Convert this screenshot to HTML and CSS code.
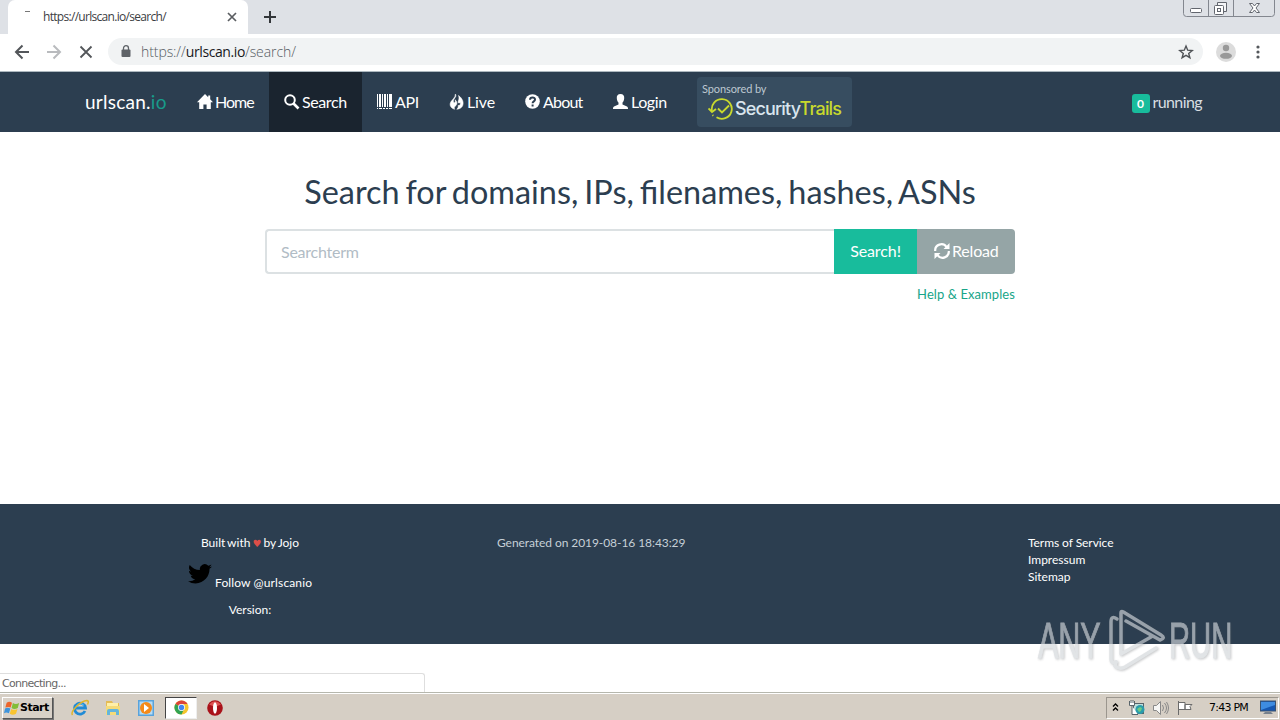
FILE: index.html
```html
<!DOCTYPE html>
<html lang="en">
<head>
<meta charset="utf-8">
<title>Search - urlscan.io</title>
<link rel="stylesheet" href="styles.css">
</head>
<body>
<div class="screen">
  <header class="tabstrip">
    <div class="tab">
      <span class="spinner"></span>
      <span class="tab-title">https://urlscan.io/search/</span>
      <svg class="tab-close" width="10" height="10" viewBox="0 0 10 10"><path d="M1 1l8 8M9 1L1 9" stroke="#5a5d61" stroke-width="1.7"/></svg>
    </div>
    <svg class="new-tab" width="12" height="12" viewBox="0 0 12 12"><path d="M6 0v12M0 6h12" stroke="#33363a" stroke-width="2"/></svg>
    <div class="window-buttons">
      <svg width="94" height="18" viewBox="0 0 94 18" fill="none"><path d="M1.500 0V13.500q0 3 3 3H89.500q3 0 3-3V0M26.500 0v16M51.500 0v16" stroke="#83878f"/><g stroke="#62666e"><rect x="8.500" y="8.500" width="11" height="4" rx="1" fill="#fff"/><path d="M35.500 5.500v-3h9v9h-3" fill="#f4f5f7"/><rect x="32.500" y="5.500" width="9" height="9" rx="1" fill="#fff"/><rect x="35.500" y="8.500" width="3" height="3"/><path d="M67.500 3.500h3l2 2.500 2-2.500h3l-3.500 4.500 3.500 4.500h-3l-2-2.500-2 2.500h-3l3.500-4.500z" fill="#fff"/></g></svg>
    </div>
  </header>
  <div class="toolbar">
    <svg class="tool" width="16" height="16" viewBox="0 0 16 16" fill="none" stroke="#53565a" stroke-width="2"><path d="M15 8H2M8.500 1.500L2 8l6.500 6.500"/></svg>
    <svg class="tool" width="16" height="16" viewBox="0 0 16 16" fill="none" stroke="#b9bbbe" stroke-width="2"><path d="M1 8h13M7.500 1.500L14 8l-6.500 6.500"/></svg>
    <svg class="tool" width="16" height="16" viewBox="0 0 16 16" fill="none" stroke="#53565a" stroke-width="1.800"><path d="M2.500 2.500l11 11M13.500 2.500l-11 11"/></svg>
    <div class="omnibox">
      <svg width="10" height="13" viewBox="0 0 10 13"><rect y="4.500" x=".5" width="9" height="7.500" rx="1" fill="#5f6368"/><path d="M2.500 5V3.200a2.500 2.500 0 0 1 5 0V5" fill="none" stroke="#5f6368" stroke-width="1.300"/></svg>
      <span class="url">https://<b>urlscan.io</b>/search/</span>
      <svg class="star" width="16" height="16" viewBox="0 0 16 16" fill="none"><path d="M8 2l1.700 4.200 4.500.3-3.500 2.900 1.200 4.300L8 11.300l-3.900 2.400 1.200-4.300-3.500-2.900 4.500-.3z" stroke="#505357" stroke-width="1.400"/></svg>
    </div>
    <svg class="avatar" width="20" height="20" viewBox="0 0 20 20"><circle cx="10" cy="10" r="10" fill="#dcdcdc"/><circle cx="10" cy="6" r="3.200" fill="#999"/><ellipse cx="10" cy="13.800" rx="6" ry="3" fill="#999"/></svg>
    <svg class="dots" width="4" height="14" viewBox="0 0 4 14" fill="#55585c"><circle cx="2" cy="2" r="1.600"/><circle cx="2" cy="7" r="1.600"/><circle cx="2" cy="12" r="1.600"/></svg>
  </div>

  <nav class="navbar">
    <a class="brand">urlscan.<span>io</span></a>
    <a class="nav-item home"><svg width="16" height="16" viewBox="0 0 16 16"><path d="M8 0l3.200 3.200V1.500h2V5.200L16 8.200h-2.200V15H9.600v-4.500H6.400V15H2.200V8.200H0z"/></svg><span>Home</span></a>
    <a class="nav-item search active"><svg width="16" height="16" viewBox="0 0 16 16"><circle cx="6" cy="6" r="4.800" fill="none" stroke="#fff" stroke-width="2"/><path d="M9.500 9.500l5 5" stroke="#fff" stroke-width="2.600"/></svg><span>Search</span></a>
    <a class="nav-item api"><svg width="16" height="16" viewBox="0 0 16 16"><path d="M0 0h1v13H0zM2 0h2v13H2zM5 0h1v13H5zM7 0h2v13H7zM10 0h1v13h-1zM12 0h3v13h-3zM0 14h1v1H0zM2 14h3v1H2zM6 14h2v1H6zM9 14h2v1H9zM12 14h3v1h-3z"/></svg><span>API</span></a>
    <a class="nav-item live"><svg width="16" height="16" viewBox="0 0 16 16"><path d="M6.400 0C8.500 3 3.500 5 4.500 8c.7 1.800 2.500.4 1.600-2.200C9 8 8 11 6.500 12c-1.300 1-1.500 2-.8 3.300C2 14.200.3 11.500 1.500 8.500 2.500 6 6.500 4 6.400 0zM9.500 1.500c4.500 3.200 5.500 7.500 4 10.500-1 2-3 3-5.700 3.300 1.700-1.700 1.500-2.800 1.200-3.700 2.200.2 2.800-1.600 2.100-3.400-.5 1-1.600 1.300-1.900.2-.4-1.800 1.700-3 .3-6.900z" stroke="#fff" stroke-width=".5"/></svg><span>Live</span></a>
    <a class="nav-item about"><svg width="16" height="16" viewBox="0 0 16 16"><circle cx="7.500" cy="7.500" r="7.300"/><path d="M5 5.800C5 2.500 10.200 2.700 10 5.600 9.900 7.500 7.600 7.200 7.600 9.300M7.600 10.500v2" fill="none" stroke="#2c3e50" stroke-width="2"/></svg><span>About</span></a>
    <a class="nav-item login"><svg width="16" height="16" viewBox="0 0 16 16"><path d="M7.500 0c2.700 0 4 1.800 3.700 4.200-.1 2-1 3.700-1.700 4.400v2l4.500 2c.8.400 1 1.200 1 2.400H0c0-1.200.2-2 1-2.400l4.500-2v-2C4.800 7.900 3.900 6.200 3.800 4.200 3.500 1.800 4.800 0 7.500 0z"/></svg><span>Login</span></a>
    <a class="sponsor">
      <span class="sponsor-label">Sponsored by</span>
      <span class="sponsor-row"><svg width="26" height="22" viewBox="0 0 26 22" fill="none" stroke="#c9d92d" stroke-width="1.800"><path d="M4 13A10 9.800 0 1 1 8.500 19.300"/><path d="M.5 10.500L4 14l4-3M10 10.500l4 4 7-7"/><path d="M4.500 17l.8.700"/></svg><span class="security">Security<em>Trails</em></span></span>
    </a>
    <div class="running"><span class="badge">0</span><span class="running-text">running</span></div>
  </nav>

  <main>
    <h1>Search for domains, IPs, filenames, hashes, ASNs</h1>
    <form class="search-group">
      <div class="search-input">Searchterm</div>
      <div class="search-button"><span>Search!</span></div>
      <div class="reload-button"><svg width="16" height="16" viewBox="0 0 16 16" fill="none" stroke="#fff" stroke-width="2.200"><path d="M1.200 8A6.200 6.200 0 0 1 12.500 4M14.800 8A6.200 6.200 0 0 1 3.500 12"/><path d="M15.500 0v6H9.500zM.5 16v-6h6z" fill="#fff" stroke="none"/></svg><span>Reload</span></div>
    </form>
    <a class="help"><span>Help &amp; Examples</span></a>
  </main>

  <footer class="footer">
    <div class="built">
      <p class="credit">Built with <i>♥</i> by Jojo</p>
      <p class="follow"><svg width="24" height="20" viewBox="0 0 24 20"><path d="M24 2.400c-.9.400-1.800.7-2.800.8 1-.6 1.800-1.600 2.200-2.700-1 .6-2 1-3.100 1.200A4.900 4.900 0 0 0 11.900 6C7.800 5.900 4.200 3.900 1.700.9.400 3.100 1 6 3.200 7.400c-.8 0-1.600-.2-2.200-.6-.1 2.300 1.600 4.400 3.900 4.900-.7.200-1.500.2-2.200.1.600 2 2.400 3.400 4.600 3.400A9.900 9.900 0 0 1 0 17.200 14 14 0 0 0 7.500 19.400c9.100 0 14.300-7.700 14-14.600 1-.6 1.800-1.500 2.500-2.400z"/></svg><span>Follow @urlscanio</span></p>
      <p class="version">Version:</p>
    </div>
    <div class="generated"><span>Generated on 2019-08-16 18:43:29</span></div>
    <ul class="links"><li class="terms">Terms of Service</li><li class="impressum">Impressum</li><li class="sitemap">Sitemap</li></ul>
  </footer>

  <div class="status"><span>Connecting...</span></div>

  <div class="taskbar">
    <div class="start"><svg width="18" height="16" viewBox="0 0 18 16"><path d="M3 2q3-2 6 0L7.500 7.500Q5 6 1.500 7.500z" fill="#ec652c"/><path d="M10 2.500q3 2 7 0L15.500 8q-4 2-7 0z" fill="#82bd38"/><path d="M1.200 8.500q3-1.500 6 0L5.500 14q-3-1.800-5.500 0z" fill="#3e94dc"/><path d="M8.200 9q3 2 7 0l-1.700 5.500q-3.500 2-7 0z" fill="#f9c430"/></svg><b>Start</b></div>
    <div class="launch">
      <svg width="18" height="18" viewBox="0 0 18 18" fill="none"><path d="M14 12A5.500 5.500 0 1 1 14.500 9H5" stroke="#218bd5" stroke-width="2.800"/><path d="M5 8.200a4.600 4.600 0 0 1 8-1.800" stroke="#62c2f2"/><path d="M1.500 16C-1 13 9 2 16 1.500c2 .2 1.300 2.500.5 4" stroke="#dfb52b" stroke-width="1.500"/></svg>
      <svg width="18" height="18" viewBox="0 0 18 18"><path d="M2 2h6l1 2h6v11H2z" fill="#e4bb55"/><path d="M3 4h11v8H3z" fill="#fff0a8"/><path d="M2 7h14v9H2z" fill="#f5db79"/><path d="M3 16v-4q0-2 2-2h8q2 0 2 2v4h-3v-3H6v3z" fill="#64b5dc"/></svg>
      <svg width="18" height="18" viewBox="0 0 18 18"><rect x="1" y="1" width="16" height="16" fill="#58a3dc"/><rect x="2.500" y="2.500" width="13" height="13" fill="#b4dcf5"/><circle cx="9" cy="9" r="6" fill="#f58a19"/><path d="M7 5l5 4-5 4z" fill="#fff"/></svg>
    </div>
    <div class="chrome-task"><svg width="15" height="15" viewBox="0 0 16 16"><circle cx="8" cy="8" r="7.500" fill="#f5c52d"/><path d="M8 8L1.500 4.250A7.500 7.500 0 0 1 14.500 4.250H8z" fill="#dc4438"/><path d="M8 8l-6.500-3.750A7.500 7.500 0 0 0 8 15.500L11 9z" fill="#31a352"/><circle cx="8" cy="8" r="3.700" fill="#fff"/><circle cx="8" cy="8" r="2.900" fill="#4385ef"/></svg></div>
    <svg class="opera" width="16" height="16" viewBox="0 0 16 16"><circle cx="8" cy="8" r="7.800" fill="#a9121a"/><path d="M2 4.500Q8-2 14 4.500L8 7z" fill="#dc5050"/><ellipse cx="8" cy="8" rx="2" ry="5.800" fill="#fff"/></svg>
    <div class="tray">
      <svg class="chevrons" width="7" height="9" viewBox="0 0 7 9" fill="none" stroke="#000" stroke-width="1.300"><path d="M1 3.500l2.500-2.500L6 3.500M1 7.500L3.500 5 6 7.500"/></svg>
      <svg class="network" width="18" height="16" viewBox="0 0 18 16"><rect x="5.500" y="3.500" width="10" height="10" fill="#bedfdd" stroke="#58636a"/><path d="M1.500 1v4.500h5V1M3 0v3M5 0v3M4 6v8.500h6" fill="#fff" stroke="#59646a"/><circle cx="12" cy="9.500" r="4.500" fill="#2a9cac"/><path d="M9 9l3-2 2 1-1 3-2 1z" fill="#6fcb83"/></svg>
      <svg class="speaker" width="18" height="16" viewBox="0 0 18 16" fill="none" stroke="#888"><path d="M1.500 5.500h3l4-4v13l-4-4h-3z" fill="#f6f6f4"/><path d="M10.500 5q2 3 0 6M12.500 3q4 5 0 10M14.500 2q4 6 0 12"/></svg>
      <svg class="flag" width="17" height="16" viewBox="0 0 17 16" fill="#fff" stroke="#6b6b6b"><path d="M1.500 1v14M2 2.500h6v7H2M8 4.500h7l-2 2 1 3H8z"/></svg>
      <span class="time">7:43 PM</span>
      <svg class="desktop" width="17" height="15" viewBox="0 0 17 15"><rect x=".5" y="1" width="15" height="10" fill="#1557b1" stroke="#3b526e"/><path d="M1 2h14v3L1 10z" fill="#3e8ce0"/><path d="M5 12h6l2 2H3z" fill="#77818d"/></svg>
    </div>
  </div>

  <div class="watermark">
    <span class="mark-text any">ANY</span>
    <svg class="mark" width="62" height="70" viewBox="0 0 62 70" fill="none" stroke-linejoin="round" stroke-linecap="round"><path d="M12 14Q6 10 6 17V54q0 5 5 3"/><path d="M16 49V8q0-3 4 0l36 22q5 3-1 5L21 16M16 49l30-17M11 57l-1 4q4 4 10 1l31-19"/></svg>
    <span class="mark-text run">RUN</span>
  </div>
</div>
</body>
</html>
```
FILE: styles.css
```css
* { box-sizing: border-box; }
body { margin: 0; overflow: hidden; }
p, h1, ul { margin: 0; padding: 0; }
svg { display: block; flex: none; }
.screen { position: relative; display: flex; flex-direction: column; width: 1280px; height: 720px; background: #fff; font-family: Lato, sans-serif; white-space: nowrap; overflow: hidden; }
.tabstrip { display: flex; align-items: flex-start; height: 34px; background: #dee1e6; flex: none; }
.tab { display: flex; align-items: center; width: 240px; height: 34px; margin-left: 8px; padding: 0 11px 0 17px; background: #fff; border-radius: 7px 7px 0 0; }
.spinner { width: 5px; height: 1px; background: #777; margin: -11px 13px 0 0; }
.tab-title { font: 12px/16px "Open Sans", sans-serif; letter-spacing: -0.7px; color: #3c4043; }
.tab-close { margin-left: auto; }
.new-tab { margin: 11px 0 0 16px; }
.window-buttons { margin: 0 0 0 auto; width: 98px; }
.toolbar { display: flex; align-items: center; height: 38px; padding: 0 20px 2px 14px; border-bottom: 1px solid #adb8bf; flex: none; }
.tool { margin-right: 16px; }
.omnibox { display: flex; align-items: center; width: 1095px; height: 27px; border-radius: 14px; background: #f1f3f4; padding: 0 9px 0 13px; margin-left: -2px; }
.url { font: 300 14px/20px "Open Sans", sans-serif; letter-spacing: -0.08px; color: #555b61; margin-left: 10px; }
.url b { color: #17191c; font-weight: 400; letter-spacing: -0.4px; }
.star { margin-left: auto; }
.avatar { margin-left: 13px; }
.dots { margin-left: 20px; }
.navbar { display: flex; height: 60px; background: #2c3e50; color: #fff; flex: none; }
.brand { width: 97px; margin-left: 85px; font-size: 19px; line-height: 60px; letter-spacing: .25px; }
.brand span { color: #189b8a; }
.nav-item { display: flex; align-items: center; padding-left: 15px; gap: 2px; font-size: 16px; line-height: 60px; letter-spacing: -.4px; }
.nav-item svg { fill: #fff; }
.home { width: 87px; letter-spacing: -1px; }
.search { width: 93px; }
.active { background: #1a242f; }
.api { width: 72px; }
.live { width: 76px; letter-spacing: -.1px; }
.about { width: 88px; letter-spacing: -.8px; }
.login { width: 84px; }
.sponsor { width: 155px; height: 50px; margin: 5px 0 0 15px; border-radius: 4px; background: #374d60; }
.sponsor-label { display: block; padding: 5px 0 0 5px; font-size: 11px; line-height: 14px; letter-spacing: -.1px; color: #bdc8d1; }
.sponsor-row { display: flex; align-items: center; height: 24px; padding: 2px 0 0 11px; }
.security { font: 500 18px/24px Inter, sans-serif; letter-spacing: -.85px; color: #d9e5ee; margin-left: 1px; }
.security em { color: #c9d92d; font-style: normal; }
.running { display: flex; align-items: center; margin: 2px 78px 0 auto; gap: 3px; color: #d9dee2; font-size: 16px; }
.running-text { margin-top: -3px; letter-spacing: -.6px; }
.badge { display: grid; place-items: center; width: 18px; height: 19px; border-radius: 3px; background: #18bc9c; color: #fff; font-size: 12px; font-weight: 700; }
main { height: 372px; display: flex; flex-direction: column; align-items: center; color: #2c3e50; flex: none; }
h1 { margin-top: 37px; font-size: 32.4px; line-height: 46px; font-weight: 400; word-spacing: -2.300px; }
.search-group { display: flex; width: 750px; height: 45px; margin-top: 14px; font-size: 16px; color: #fff; }
.search-input { width: 569px; border: 2px solid #dce1e3; border-right: 0; border-radius: 4px 0 0 4px; padding-left: 14px; line-height: 42px; color: #b1bcc5; letter-spacing: -.25px; }
.search-button { width: 83px; background: #18bc9c; text-align: center; line-height: 44px; letter-spacing: -.1px; }
.reload-button { display: flex; align-items: center; width: 98px; padding-left: 17px; gap: 2px; border-radius: 0 4px 4px 0; background: #95a5a6; letter-spacing: -.2px; padding-bottom: 2px; }
.help { width: 750px; text-align: right; color: #18a589; font-size: 13px; line-height: 20px; letter-spacing: .07px; margin-top: 10px; }
.footer { display: flex; height: 140px; padding: 30px 0 0; background: #2c3e50; color: #fff; font-size: 12px; line-height: 17px; flex: none; }
.built { width: 140px; margin-left: 180px; text-align: center; }
.credit { word-spacing: -1px; }
.credit i { color: #dd4e48; font-style: normal; font-family: "DejaVu Sans", sans-serif; font-size: 10px; }
.follow { display: flex; height: 40px; padding-left: 8px; gap: 3px; letter-spacing: .13px; }
.follow svg { margin-top: 12px; }
.follow span { margin-top: 22px; }
.version { margin-top: 9px; }
.generated { margin-left: 177px; width: 531px; color: #c6d0d7; letter-spacing: -.07px; }
.links { list-style: none; }
.terms { letter-spacing: -.06px; }
.status { width: 425px; height: 19px; margin-top: 29px; border: 1px solid #dedede; border-left: 0; border-bottom: 0; border-radius: 0 3px 0 0; font: 11px/19px "DejaVu Sans", sans-serif; letter-spacing: -.7px; color: #666; padding-left: 2px; flex: none; }
.taskbar { display: flex; align-items: center; height: 28px; padding-top: 2px; background: #d6cfc5; border-top: 1px solid #b6b7ad; box-shadow: inset 0 1px #fff; flex: none; }
.start { display: flex; align-items: center; width: 51px; height: 22px; margin-left: 2px; padding-left: 1px; background: #d8d1c8; border: 1px solid #fff; border-right-color: #555; border-bottom-color: #555; box-shadow: 1px 1px #777; }
.start b { font: bold 11px/16px "DejaVu Sans", sans-serif; letter-spacing: -.5px; }
.start svg { width: 16px; }
.launch { display: flex; gap: 15px; margin-left: 18px; width: 94px; }
.chrome-task { display: grid; place-items: center; width: 32px; height: 22px; background: #fff; border: 1px solid #444; border-right-color: #eee; border-bottom-color: #eee; }
.opera { margin-left: 10px; }
.tray { display: flex; align-items: center; width: 173px; height: 22px; margin: 0 1px 0 auto; padding-left: 5px; border: 1px solid #9b968e; border-right-color: #fff; border-bottom-color: #fff; }
.network { margin-left: 9px; }
.speaker { margin-left: 6px; }
.flag { margin-left: 7px; }
.time { width: 44px; margin-left: 15px; font: 11px/16px "DejaVu Sans", sans-serif; letter-spacing: -.75px; }
.desktop { margin-left: 7px; }
.watermark { position: absolute; left: 1034px; top: 603px; width: 206px; height: 76px; display: flex; align-items: center; opacity: .65; filter: drop-shadow(1px 1px 1px rgba(70,75,80,.45)); }
.mark { stroke: #d2d6da; stroke-width: 3.5; margin: -2px 3px 0 4px; }
.mark-text { font: 50px/60px "Liberation Sans", sans-serif; letter-spacing: 0; color: #d2d6da; -webkit-text-stroke: 1px #d2d6da; transform-origin: left center; }
.any { width: 67px; transform: translateX(4px) scaleX(.61); }
.run { width: 66px; transform: translateX(-1px) scaleX(.585); }
```
